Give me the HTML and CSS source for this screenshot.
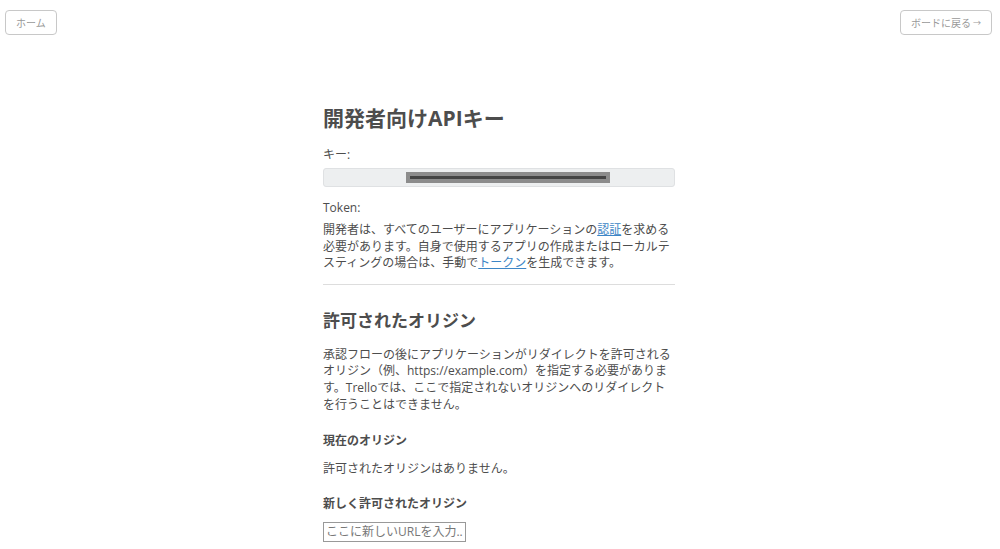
FILE: index.html
```html
<!DOCTYPE html>
<html lang="ja">
<head>
  <meta charset="UTF-8">
  <meta name="viewport" content="width=device-width, initial-scale=1.0">
  <title>開発者向けAPIキー</title>
  <link rel="stylesheet" href="styles.css">
</head>
<body>
  <div class="top-bar">
    <a class="nav-button" href="#">ホーム</a>
    <a class="nav-button" href="#">ボードに戻る <span class="arrow">→</span></a>
  </div>

  <div class="content">
    <h1>開発者向けAPIキー</h1>

    <p class="field-label">キー:</p>
    <div class="key-box">
      <span class="key-mask"><span class="key-line"></span></span>
    </div>

    <p class="field-label token-label">Token:</p>
    <p class="token-text">開発者は、すべてのユーザーにアプリケーションの<a href="#">認証</a>を求める必要があります。自身で使用するアプリの作成またはローカルテスティングの場合は、手動で<a href="#">トークン</a>を生成できます。</p>

    <hr>

    <h2>許可されたオリジン</h2>
    <p class="origin-text">承認フローの後にアプリケーションがリダイレクトを許可されるオリジン（例、https://example.com）を指定する必要があります。Trelloでは、ここで指定されないオリジンへのリダイレクトを行うことはできません。</p>

    <h3>現在のオリジン</h3>
    <p class="empty-text">許可されたオリジンはありません。</p>

    <h3 class="new-origin">新しく許可されたオリジン</h3>
    <input class="origin-input" type="text" placeholder="ここに新しいURLを入力...">
  </div>
</body>
</html>
```

FILE: styles.css
```css
body {
  font-family: "Open Sans", "Noto Sans CJK JP", sans-serif;
  color: #4d4d4d;
  background-color: #ffffff;
  margin: 0;
  padding: 0;
}
.top-bar {
  display: flex;
  justify-content: space-between;
  padding: 10px 8px 0 5px;
}
.nav-button {
  display: inline-flex;
  align-items: center;
  justify-content: center;
  box-sizing: border-box;
  height: 25px;
  padding: 0 10px;
  border: 1px solid #c8c8c8;
  border-radius: 4px;
  font-size: 10px;
  color: #999999;
  text-decoration: none;
}
.arrow {
  font-size: 8px;
  margin-left: 2px;
}
.content {
  width: 352px;
  margin: 70px 0 0 calc(50% - 177px);
}
h1 {
  font-size: 21px;
  line-height: 26px;
  font-weight: 700;
  margin: 0;
}
p {
  margin: 0;
  font-size: 12px;
  line-height: 17px;
}
.field-label {
  margin-top: 15px;
}
.key-box {
  box-sizing: border-box;
  height: 19px;
  margin-top: 5px;
  padding: 3px 0 0 82px;
  background-color: #edeff0;
  border: 1px solid #dfe1e3;
  border-radius: 3px;
}
.key-mask {
  display: flex;
  align-items: center;
  justify-content: center;
  width: 204px;
  height: 11px;
  background-color: #8c8c8c;
}
.key-line {
  display: block;
  width: 196px;
  height: 3px;
  background-color: #444444;
}
.token-label {
  margin-top: 12px;
}
.token-text {
  margin-top: 6px;
  line-height: 16.6px;
}
a {
  color: #3d86c6;
}
hr {
  border: none;
  border-top: 1px solid #dddddd;
  margin: 12px 0 0;
}
h2 {
  font-size: 17px;
  line-height: 22px;
  font-weight: 700;
  margin: 25px 0 0;
}
.origin-text {
  margin-top: 15px;
  line-height: 16.7px;
}
h3 {
  font-size: 12px;
  line-height: 17px;
  font-weight: 700;
  margin: 18px 0 0;
}
.empty-text {
  margin-top: 11px;
}
.origin-input {
  display: block;
  box-sizing: border-box;
  width: 143px;
  height: 20px;
  margin-top: 10px;
  padding: 0 2px;
  border: 1px solid #999999;
  border-radius: 0;
  font-family: "Open Sans", "Noto Sans CJK JP", sans-serif;
  font-size: 12px;
  color: #4d4d4d;
}
.origin-input::placeholder {
  color: #777777;
}
```
